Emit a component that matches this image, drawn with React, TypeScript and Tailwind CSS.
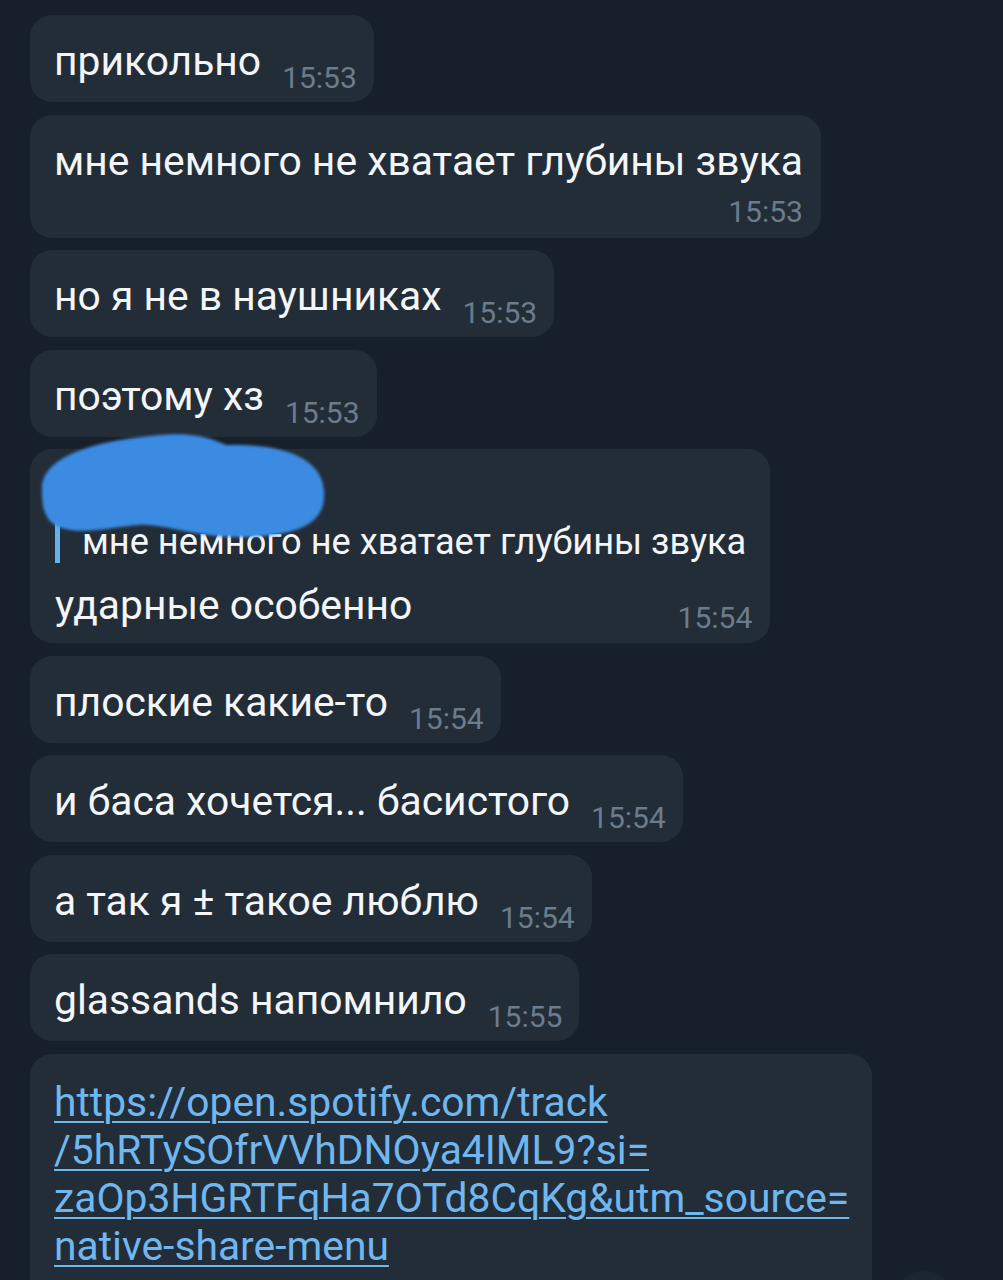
import React from 'react';

type Msg = { text: string; time: string; stacked?: boolean };

const before: Msg[] = [
  { text: 'прикольно', time: '15:53' },
  { text: 'мне немного не хватает глубины звука', time: '15:53', stacked: true },
  { text: 'но я не в наушниках', time: '15:53' },
  { text: 'поэтому хз', time: '15:53' },
];

const after: Msg[] = [
  { text: 'плоские какие-то', time: '15:54' },
  { text: 'и баса хочется... басистого', time: '15:54' },
  { text: 'а так я ± такое люблю', time: '15:54' },
  { text: 'glassands напомнило', time: '15:55' },
];

const linkLines = [
  'https://open.spotify.com/track',
  '/5hRTySOfrVVhDNOya4IML9?si=',
  'zaOp3HGRTFqHa7OTd8CqKg&utm_source=',
  'native-share-menu',
];

function Time({ children }: { children: React.ReactNode }) {
  return <span className="text-[30px] leading-[34px] text-[#6b7c8c] whitespace-nowrap">{children}</span>;
}

function Bubble({ msg }: { msg: Msg }) {
  if (msg.stacked) {
    return (
      <div className="self-start flex flex-col rounded-[22px] bg-[#222d38] pl-[24px] pr-[18px] pt-[22px] pb-[9px]">
        <span className="text-[40.8px] leading-[48px] text-[#f3f5f7]">{msg.text}</span>
        <div className="mt-[10px] flex justify-end">
          <Time>{msg.time}</Time>
        </div>
      </div>
    );
  }
  return (
    <div className="self-start flex items-end rounded-[22px] bg-[#222d38] pl-[24px] pr-[17px] pt-[22px] pb-[7px]">
      <span className="mb-[10px] text-[40.8px] leading-[48px] text-[#f3f5f7] whitespace-nowrap">{msg.text}</span>
      <span className="ml-[21px]">
        <Time>{msg.time}</Time>
      </span>
    </div>
  );
}

function Blob() {
  // the blurred-out sender name
  return (
    <svg
      className="absolute left-[0px] top-[-22px]"
      width="310"
      height="120"
      viewBox="0 0 310 120"
    >
      <defs>
        <filter id="soft" x="-10%" y="-10%" width="120%" height="120%">
          <feGaussianBlur stdDeviation="1.6" />
        </filter>
      </defs>
      <path
        d="M12 64 C10 30 62 14 130 8 C166 5 182 12 196 18 C232 17 291 22 294 64 C297 100 262 110 205 110 C165 110 132 96 108 98 C82 100 42 111 22 96 C13 87 12 76 12 64 Z"
        fill="#3b8be3"
        filter="url(#soft)"
      />
    </svg>
  );
}

function ReplyBubble() {
  return (
    <div className="relative self-start flex flex-col rounded-[22px] bg-[#222d38] pl-[25px] pr-[18px] pt-[20px] pb-[8px]">
      <div className="mr-[6px] border-l-[5px] border-[#62b2ef] pl-[22px]">
        <div className="h-[52px]" />
        <div className="text-[36.2px] leading-[42px] text-[#f3f5f7] whitespace-nowrap">
          мне немного не хватает глубины звука
        </div>
      </div>
      <div className="mt-[18px] flex items-end justify-between">
        <span className="mb-[6px] text-[40.8px] leading-[48px] text-[#f3f5f7] whitespace-nowrap">ударные особенно</span>
        <Time>15:54</Time>
      </div>
      <Blob />
    </div>
  );
}

export default function App() {
  return (
    <div
      className="relative h-[1280px] w-[1003px] overflow-hidden bg-[#17202a]"
      style={{ fontFamily: 'Roboto, "Noto Sans", sans-serif' }}
    >
      <div className="flex flex-col gap-[12.5px] pl-[30px] pt-[15px]">
        {before.map((m, i) => (
          <Bubble key={i} msg={m} />
        ))}
        <ReplyBubble />
        {after.map((m, i) => (
          <Bubble key={i} msg={m} />
        ))}
        <div className="self-start rounded-[22px] bg-[#222d38] pl-[24px] pr-[23px] pt-[24px] pb-[40px]">
          <a className="block text-[40.8px] leading-[48px] text-[#70b7ef] underline decoration-2 underline-offset-[5px]">
            {linkLines.map((l, i) => (
              <span key={i} className="block whitespace-nowrap">
                {l}
              </span>
            ))}
          </a>
        </div>
      </div>
      <div className="absolute left-[893px] top-[1271px] h-[62px] w-[62px] rounded-full bg-[#1c2631]" />
    </div>
  );
}
